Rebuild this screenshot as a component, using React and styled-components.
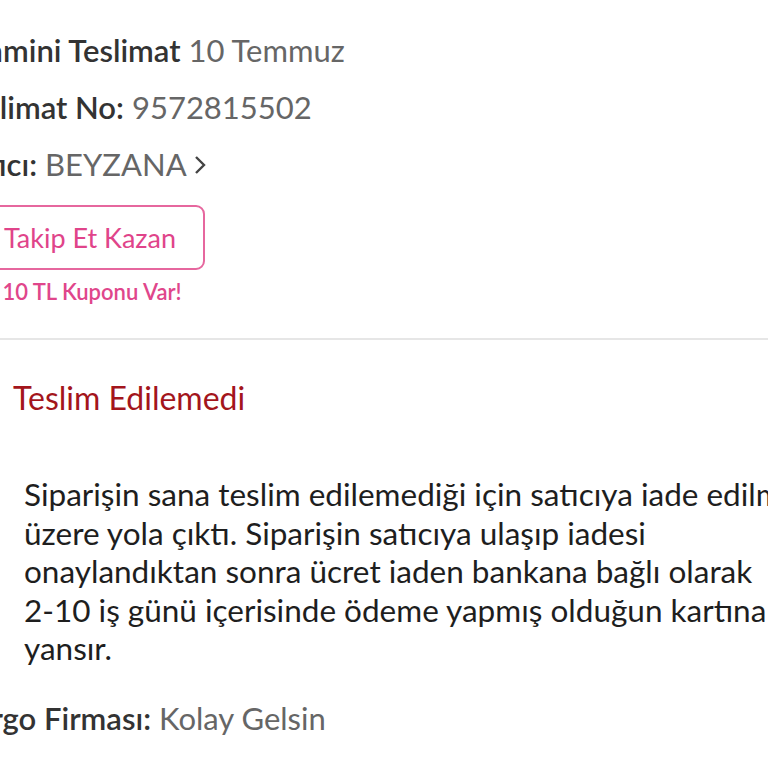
import styled, { createGlobalStyle } from 'styled-components'

const Global = createGlobalStyle`
  html, body {
    margin: 0;
    padding: 0;
    background: #fff;
    overflow: hidden;
  }
  body {
    font-family: Lato, "Open Sans", sans-serif;
  }
`

const Page = styled.div`
  width: 900px;
  margin-left: -45px;
  padding-top: 22px;
`

const InfoRow = styled.div`
  font-size: 31px;
  line-height: 57px;
  height: 57px;
  color: #666;
  white-space: nowrap;
  display: flex;
  align-items: center;
  gap: 8px;
`

const Label = styled.span`
  font-weight: 600;
  color: #333;
`

const Chevron = styled.svg`
  width: 14px;
  height: 22px;
  margin-left: -2px;
`

const FollowBox = styled.div`
  display: inline-flex;
  flex-direction: column;
  align-items: center;
  margin-top: 12px;
`

const FollowButton = styled.button`
  font-family: inherit;
  font-size: 27px;
  color: #e0448a;
  background: #fff;
  border: 2px solid #e6679e;
  border-radius: 9px;
  height: 65px;
  padding: 0 27px 0 47px;
  cursor: pointer;
`

const Coupon = styled.div`
  font-size: 22px;
  font-weight: 600;
  color: #e0468b;
  margin-top: 8px;
  padding-left: 24px;
`

const Divider = styled.hr`
  border: none;
  border-top: 2px solid #e6e6e6;
  margin: 33px 0 0;
`

const Status = styled.div`
  display: flex;
  align-items: center;
  gap: 30px;
  margin-top: 38px;
  font-size: 32px;
  color: #a3151c;
`

const Note = styled.p`
  margin: 58px 0 0;
  padding-left: 69px;
  width: 791px;
  font-size: 31.5px;
  line-height: 38.5px;
  color: #1e1e1e;
`

const NoBreak = styled.span`
  white-space: nowrap;
`

const Carrier = styled(InfoRow)`
  margin-top: 22px;
`

export default function App() {
  return (
    <>
      <Global />
      <Page>
        <InfoRow>
          <Label>Tahmini Teslimat</Label>
          <span>10 Temmuz</span>
        </InfoRow>
        <InfoRow>
          <Label>Teslimat No:</Label>
          <span>9572815502</span>
        </InfoRow>
        <InfoRow>
          <Label>Satıcı:</Label>
          <span>BEYZANA</span>
          <Chevron viewBox="0 0 14 22">
            <path d="M3 3l8 8-8 8" fill="none" stroke="#444" strokeWidth="2.4" />
          </Chevron>
        </InfoRow>
        <FollowBox>
          <FollowButton>Takip Et Kazan</FollowButton>
          <Coupon>10 TL Kuponu Var!</Coupon>
        </FollowBox>
        <Divider />
        <Status>
          <svg width="28" height="28" viewBox="0 0 28 28">
            <circle cx="14" cy="14" r="13" fill="#a3151c" />
            <path d="M9 9l10 10M19 9L9 19" stroke="#fff" strokeWidth="2.4" />
          </svg>
          Teslim Edilemedi
        </Status>
        <Note>
          Siparişin sana teslim edilemediği için satıcıya iade edilmek üzere yola çıktı. Siparişin satıcıya ulaşıp iadesi onaylandıktan sonra ücret iaden bankana bağlı olarak <NoBreak>2-10</NoBreak> iş günü içerisinde ödeme yapmış olduğun kartına yansır.
        </Note>
        <Carrier>
          <Label>Kargo Firması:</Label>
          <span>Kolay Gelsin</span>
        </Carrier>
      </Page>
    </>
  )
}
